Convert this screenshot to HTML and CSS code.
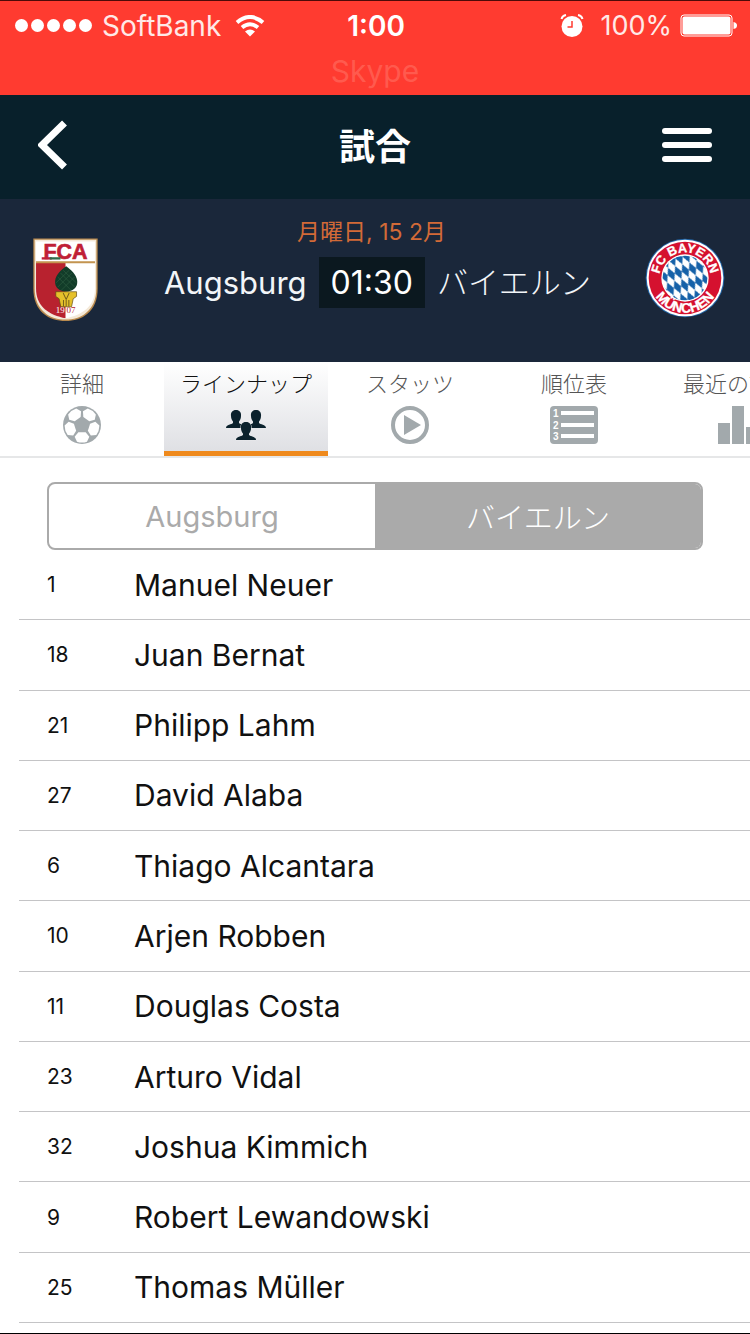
FILE: index.html
```html
<!DOCTYPE html>
<html lang="ja">
<head>
    <meta charset="UTF-8">
    <meta name="viewport" content="width=device-width, initial-scale=1.0">
    <title>試合</title>
    <link rel="stylesheet" href="styles.css">
</head>
<body>
    <div class="status-bar">
        <div class="status-row">
            <div class="status-left">
                <div class="signal"><i></i><i></i><i></i><i></i><i></i></div>
                <span>SoftBank</span>
                <svg class="wifi" width="30" height="22" viewBox="0 0 30 22">
                    <g fill="none" stroke="#fff" stroke-width="4">
                        <path d="M2 7.500 Q15 -3.500 28 7.500"/>
                        <path d="M7 12.500 Q15 6 23 12.500"/>
                    </g>
                    <path d="M15 21.500 L10 16.500 Q15 12.500 20 16.500 Z" fill="#fff"/>
                </svg>
            </div>
            <span class="clock">1:00</span>
            <div class="status-right">
                <svg class="alarm" width="24" height="24" viewBox="0 0 24 24">
                    <circle cx="12" cy="12.500" r="10.500" fill="#fff"/>
                    <path d="M12 7 V13 H7.500" fill="none" stroke="#ff3b30" stroke-width="1.500"/>
                    <path d="M1.500 5 Q2.500 1.500 6 1 M22.500 5 Q21.500 1.500 18 1" fill="none" stroke="#fff" stroke-width="2"/>
                </svg>
                <span>100%</span>
                <svg width="57" height="24" viewBox="0 0 57 24">
                    <rect x="1" y="1" width="51" height="21" rx="3" fill="none" stroke="#fff" stroke-width="1"/>
                    <rect x="2.500" y="2.500" width="48" height="18" rx="2" fill="#fff"/>
                    <path d="M53.500 8 Q57 8.500 57 11.500 Q57 14.500 53.500 15 Z" fill="#fff"/>
                </svg>
            </div>
        </div>
        <div class="status-app">Skype</div>
    </div>

    <header class="nav-bar">
        <a class="back" href="#" aria-label="戻る">
            <svg width="30" height="50" viewBox="0 0 30 50">
                <path d="M26.500 3 L4 25 L26.500 47" fill="none" stroke="#fff" stroke-width="7"/>
            </svg>
        </a>
        <h1>試合</h1>
        <button class="menu" type="button" aria-label="メニュー">
            <i></i><i></i><i></i>
        </button>
    </header>

    <section class="match">
        <svg class="crest" width="65" height="83" viewBox="0 0 194 247">
            <clipPath id="shield">
                <path d="M9 9 H185 V150 C185 206 145 229 97 239 C49 229 9 206 9 150 Z"/>
            </clipPath>
            <path d="M1 1 H193 V150 C193 220 146 247 97 247 C48 247 1 220 1 150 Z" fill="#b98a4e"/>
            <path d="M5 5 H189 V150 C189 216 143 243 97 243 C51 243 5 216 5 150 Z" fill="#f4e9d8"/>
            <g clip-path="url(#shield)">
                <rect width="194" height="247" fill="#fff"/>
                <rect y="74" width="97" height="173" fill="#b8222f"/>
                <rect y="69" width="194" height="6" fill="#c39450"/>
            </g>
            <text x="97" y="63" font-family="Liberation Sans" font-size="64" font-weight="bold" text-anchor="middle" fill="#c01f36" stroke="#c01f36" stroke-width="2">FCA</text>
            <path d="M26 57 H56 V64 H26 Z" fill="#c01f36"/>
            <path d="M50 57 H82 V64 H50 Z" fill="#2f6b4b"/>
            <path d="M99 84 C112 94 130 108 132 128 C134 148 118 159 99 160 C80 159 64 148 66 128 C68 108 86 94 99 84 Z" fill="#123c29"/>
            <path d="M82 104 L124 146 M74 116 L114 156 M90 96 L130 134 M116 104 L74 146 M124 116 L84 156 M108 96 L68 134" stroke="#2d5c40" stroke-width="2"/>
            <path d="M68 160 H130 V174 L120 181 L115 205 H83 L78 181 L68 174 Z" fill="#e5c02b" stroke="#5d4813" stroke-width="2"/>
            <path d="M90 164 L99 183 L108 164 M91 185 V204 M99 185 V204 M107 185 V204" fill="none" stroke="#76601b" stroke-width="3"/>
            <text x="68" y="225" font-family="Liberation Serif" font-size="27" fill="#fff">19</text>
            <text x="100" y="225" font-family="Liberation Serif" font-size="27" fill="#b8222f">07</text>
        </svg>

        <div class="match-info">
            <p class="date">月曜日, 15 2月</p>
            <div class="teams">
                <span>Augsburg</span>
                <span class="kickoff">01:30</span>
                <span class="kana">バイエルン</span>
            </div>
        </div>

        <svg class="crest" width="80" height="80" viewBox="0 0 240 240">
            <defs>
                <pattern id="rauten" width="22" height="42" patternUnits="userSpaceOnUse" patternTransform="translate(120 120) rotate(-14) skewX(12)">
                    <rect width="22" height="42" fill="#fff"/>
                    <path d="M11 0 L22 21 L11 42 L0 21 Z" fill="#1561a8"/>
                </pattern>
                <path id="arcTop" d="M43 140 V120 A77 77 0 0 1 197 120 V140"/>
                <path id="arcBottom" d="M16 120 A104 104 0 0 0 224 120"/>
            </defs>
            <circle cx="120" cy="120" r="118" fill="#2467a8"/>
            <circle cx="120" cy="120" r="115" fill="#fff"/>
            <circle cx="120" cy="120" r="109" fill="#d5112f"/>
            <circle cx="120" cy="120" r="71" fill="#fff"/>
            <circle cx="120" cy="120" r="67" fill="url(#rauten)"/>
            <g font-family="Liberation Sans" font-weight="bold" font-size="38" fill="#fff" stroke="#fff" text-anchor="middle">
                <text><textPath href="#arcTop" startOffset="50%">FC BAYERN</textPath></text>
                <text font-size="41"><textPath href="#arcBottom" startOffset="50%">MÜNCHEN</textPath></text>
            </g>
        </svg>
    </section>

    <nav class="tabs">
        <a href="#">
            <span>詳細</span>
            <svg width="38" height="38" viewBox="-57 -57 114 114">
                <circle r="57" fill="#a2a9ac"/>
                <g fill="#fff">
                    <path id="hex" d="M-11 22 L11 22 L22 35 L15 50 Q0 55 -15 50 L-22 35 Z"/>
                    <use href="#hex" transform="rotate(72)"/>
                    <use href="#hex" transform="rotate(144)"/>
                    <use href="#hex" transform="rotate(216)"/>
                    <use href="#hex" transform="rotate(288)"/>
                </g>
            </svg>
        </a>
        <a href="#" class="active">
            <span>ラインナップ</span>
            <svg width="40" height="38" viewBox="0 0 40 38">
                <defs>
                    <path id="bust" d="M10 0 C13.500 0 15.500 2.500 15 6 C15 8.500 14 10.500 13 11.500 V13 C14 14.500 20 14.500 20 18 H0 C0 14.500 6 14.500 7 13 V11.500 C6 10.500 5 8.500 5 6 C4.500 2.500 6.500 0 10 0 Z"/>
                </defs>
                <g fill="#0b222d">
                    <use href="#bust" x="0" y="4"/>
                    <use href="#bust" x="20" y="4"/>
                    <use href="#bust" x="10" y="16" stroke="#e9eaec" stroke-width="1"/>
                    <use href="#bust" x="10" y="16"/>
                </g>
            </svg>
        </a>
        <a href="#">
            <span>スタッツ</span>
            <svg width="38" height="38" viewBox="0 0 38 38">
                <circle cx="19" cy="19" r="17" fill="none" stroke="#a2a9ac" stroke-width="4"/>
                <path d="M13 9 L30 19 L13 29 Z" fill="#a2a9ac"/>
            </svg>
        </a>
        <a href="#">
            <span>順位表</span>
            <svg width="48" height="38" viewBox="0 0 48 38">
                <rect width="48" height="38" rx="4" fill="#a2a9ac"/>
                <path d="M11 5 H44 V9 H11 Z M11 17 H44 V21 H11 Z M11 28 H44 V32 H11 Z" fill="#fff"/>
                <g font-family="Liberation Sans" font-size="10" font-weight="bold" fill="#fff">
                    <text x="3" y="11">1</text>
                    <text x="3" y="23">2</text>
                    <text x="3" y="34">3</text>
                </g>
            </svg>
        </a>
        <a href="#">
            <span>最近の試合</span>
            <svg width="40" height="38" viewBox="0 0 40 38">
                <path d="M0 17 H12 V38 H0 Z M14 0 H26 V38 H14 Z M28 21 H40 V38 H28 Z" fill="#a2a9ac"/>
            </svg>
        </a>
    </nav>

    <main>
        <div class="switch">
            <button type="button">Augsburg</button>
            <button type="button" class="selected kana">バイエルン</button>
        </div>
        <ul class="players">
            <li><span class="number">1</span>Manuel Neuer</li>
            <li><span class="number">18</span>Juan Bernat</li>
            <li><span class="number">21</span>Philipp Lahm</li>
            <li><span class="number">27</span>David Alaba</li>
            <li><span class="number">6</span>Thiago Alcantara</li>
            <li><span class="number">10</span>Arjen Robben</li>
            <li><span class="number">11</span>Douglas Costa</li>
            <li><span class="number">23</span>Arturo Vidal</li>
            <li><span class="number">32</span>Joshua Kimmich</li>
            <li><span class="number">9</span>Robert Lewandowski</li>
            <li><span class="number">25</span>Thomas Müller</li>
        </ul>
    </main>
</body>
</html>
```

FILE: styles.css
```css
* {
    box-sizing: border-box;
}
body {
    margin: 0;
    min-height: 100vh;
    display: flex;
    flex-direction: column;
    font-family: Inter, "Noto Sans CJK JP", sans-serif;
    background: #fff;
    color: #111;
    border-bottom: 1px solid #000;
    overflow-x: hidden;
}
svg {
    display: block;
    flex: none;
}
button {
    font: inherit;
    border: none;
    background: none;
    padding: 0;
    cursor: pointer;
}
.kana {
    font-weight: 300;
}

/* status bar */
.status-bar {
    background: #ff3b30;
    color: #ffe9e7;
    border-top: 1px solid #4d0a08;
    font-size: 28px;
    height: 95px;
}
.status-row {
    display: grid;
    grid-template-columns: 1fr auto 1fr;
    align-items: center;
    height: 49px;
    padding: 0 13px 0 15px;
}
.status-left,
.status-right {
    display: flex;
    align-items: center;
}
.status-left {
    gap: 10px;
}
.status-right {
    gap: 8px;
    justify-content: flex-end;
    font-size: 27px;
}
.wifi {
    margin-left: 4px;
}
.alarm {
    margin-right: 8px;
}
.signal {
    display: flex;
    gap: 3px;
}
.signal i {
    width: 13px;
    height: 13px;
    border-radius: 50%;
    background: #fff;
}
.clock {
    font-weight: 600;
    color: #fff;
}
.status-app {
    text-align: center;
    color: #ff5a4e;
    font-size: 30px;
    line-height: 42px;
}

/* title bar */
.nav-bar {
    display: grid;
    grid-template-columns: 1fr auto 1fr;
    align-items: center;
    height: 104px;
    padding: 0 38px 4px;
    background: #08202b;
}
.nav-bar h1 {
    margin: 0;
    padding-top: 4px;
    color: #fff;
    font-size: 36px;
    line-height: 48px;
}
.menu {
    justify-self: end;
    display: flex;
    flex-direction: column;
    gap: 8px;
}
.menu i {
    width: 50px;
    height: 6px;
    border-radius: 3px;
    background: #fff;
}

/* match header */
.match {
    display: flex;
    justify-content: space-between;
    height: 163px;
    padding: 19px 25px 0 33px;
    background: #1a273a;
}
.crest {
    margin-top: 20px;
}
.match-info {
    text-align: center;
}
.date {
    margin: 0 0 11px;
    color: #d26a37;
    font-size: 23px;
    line-height: 28px;
}
.teams {
    display: flex;
    align-items: center;
    gap: 12px;
    margin-left: 12px;
    color: #f2f5f8;
    font-size: 31px;
    line-height: 51px;
}
.kickoff {
    padding: 0 12px;
    background: #0b181f;
    color: #fff;
    font-size: 32px;
}

/* tabs */
.tabs {
    display: flex;
    height: 96px;
    overflow: hidden;
    border-bottom: 2px solid #e6e7e8;
}
.tabs a {
    flex: none;
    width: 164px;
    padding-top: 8px;
    display: flex;
    flex-direction: column;
    align-items: center;
    gap: 8px;
    color: #555;
    font-size: 22px;
    font-weight: 300;
    line-height: 28px;
    text-decoration: none;
}
.tabs .active {
    color: #111;
    background: linear-gradient(#fff, #dfe0e4);
    border-bottom: 5px solid #ef8a1d;
}

/* line-up */
main {
    flex: 1;
    display: flex;
    flex-direction: column;
    padding: 24px 0 10px;
}
.switch {
    display: flex;
    height: 68px;
    margin: 0 47px;
    border: 2px solid #aaa;
    border-radius: 8px;
    overflow: hidden;
}
.switch button {
    flex: 1;
    color: #aaa;
    font-size: 29px;
}
.switch .selected {
    background: #aaa;
    color: #fff;
}
.players {
    flex: 1;
    display: grid;
    grid-auto-rows: 1fr;
    list-style: none;
    margin: 0 0 0 19px;
    padding: 0;
}
.players li {
    display: flex;
    align-items: center;
    min-height: 64px;
    padding-left: 28px;
    border-bottom: 1px solid #c4c4c6;
    font-size: 30px;
}
.number {
    width: 87px;
    font-size: 21px;
}
```
